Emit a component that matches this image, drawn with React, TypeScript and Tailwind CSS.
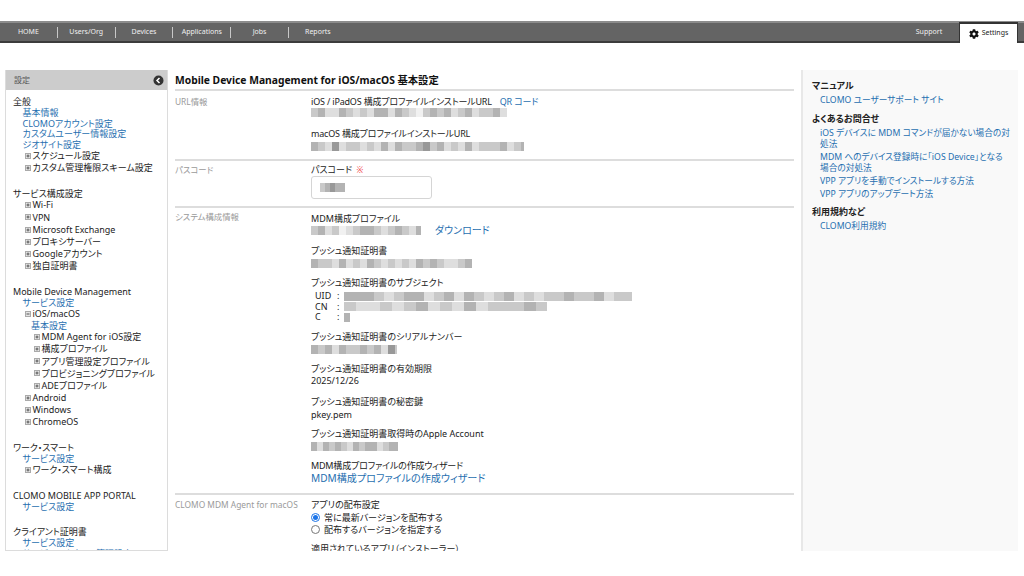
import { FaCog } from "react-icons/fa";

const font = { fontFamily: '"Noto Sans", "Noto Sans CJK JP", sans-serif' };

const shades = ["bg-[#f1f1f1]", "bg-[#dedede]", "bg-[#c9c9c9]", "bg-[#b3b3b3]", "bg-[#989898]"];

const Redact = ({ pattern, cell = 7, className = "" }: { pattern: string; cell?: number; className?: string }) => (
  <div className={`flex h-[9px] overflow-hidden blur-[0.6px] ${className}`}>
    {pattern.split("").map((c, i) => (
      <div key={i} className={`h-full shrink-0 ${shades[Number(c)]}`} style={{ width: cell }} />
    ))}
  </div>
);

const TreeIcon = ({ open = false }: { open?: boolean }) => (
  <svg width="6" height="6" viewBox="0 0 6 6" className="shrink-0">
    <rect x="0.5" y="0.5" width="5" height="5" fill="#e4e4e4" stroke="#aaa" strokeWidth="1" />
    <path d={open ? "M1.5 3H4.5" : "M1.5 3H4.5M3 1.5V4.5"} stroke="#555" strokeWidth="1" />
  </svg>
);

const SideHead = ({ children, className = "" }: { children: React.ReactNode; className?: string }) => (
  <div className={`h-[11px] leading-[11px] text-[#222] whitespace-nowrap ${className}`}>{children}</div>
);

const SideLink = ({ children, deep = false }: { children: React.ReactNode; deep?: boolean }) => (
  <div className={`h-[10.7px] leading-[11px] text-[#1f6fb0] whitespace-nowrap ${deep ? "pl-[18px]" : "pl-[9.5px]"}`}>{children}</div>
);

const Tree = ({ children, open = false, deep = false }: { children: React.ReactNode; open?: boolean; deep?: boolean }) => (
  <div className={`flex h-[12.2px] items-center gap-[1.5px] whitespace-nowrap text-[#222] ${deep ? "pl-[21px]" : "pl-[12px]"}`}>
    <TreeIcon open={open} />
    <span>{children}</span>
  </div>
);

const Sidebar = () => (
  <aside className="flex h-[481px] w-[163px] shrink-0 flex-col border-x border-b border-[#dcdcdc]">
    <div className="flex h-5 shrink-0 items-center justify-between bg-[#cccccc] pl-2 pr-[3px] text-[8px] text-[#555]">
      <span>設定</span>
      <svg width="11" height="11" viewBox="0 0 11 11">
        <circle cx="5.5" cy="5.5" r="5" fill="#333" />
        <path d="M6.5 3L4 5.5L6.5 8" fill="none" stroke="#fff" strokeWidth="1.5" />
      </svg>
    </div>
    <div className="min-h-0 flex-1 overflow-hidden pl-[7px] pt-[6px] text-[9px]">
      <SideHead>全般</SideHead>
      <SideLink>基本情報</SideLink>
      <SideLink>CLOMOアカウント設定</SideLink>
      <SideLink>カスタムユーザー情報設定</SideLink>
      <SideLink>ジオサイト設定</SideLink>
      <Tree>スケジュール設定</Tree>
      <Tree>カスタム管理権限スキーム設定</Tree>
      <SideHead className="mt-[14px]">サービス構成設定</SideHead>
      <Tree>Wi-Fi</Tree>
      <Tree>VPN</Tree>
      <Tree>Microsoft Exchange</Tree>
      <Tree>プロキシサーバー</Tree>
      <Tree>Googleアカウント</Tree>
      <Tree>独自証明書</Tree>
      <SideHead className="mt-[14px]">Mobile Device Management</SideHead>
      <SideLink>サービス設定</SideLink>
      <Tree open>iOS/macOS</Tree>
      <SideLink deep>基本設定</SideLink>
      <Tree deep>MDM Agent for iOS設定</Tree>
      <Tree deep>構成プロファイル</Tree>
      <Tree deep>アプリ管理設定プロファイル</Tree>
      <Tree deep>プロビジョニングプロファイル</Tree>
      <Tree deep>ADEプロファイル</Tree>
      <Tree>Android</Tree>
      <Tree>Windows</Tree>
      <Tree>ChromeOS</Tree>
      <SideHead className="mt-[14px]">ワーク・スマート</SideHead>
      <SideLink>サービス設定</SideLink>
      <Tree>ワーク・スマート構成</Tree>
      <SideHead className="mt-[14px]">CLOMO MOBILE APP PORTAL</SideHead>
      <SideLink>サービス設定</SideLink>
      <SideHead className="mt-[14px]">クライアント証明書</SideHead>
      <SideLink>サービス設定</SideLink>
      <SideLink>サービスアカウント管理設定</SideLink>
    </div>
  </aside>
);

const Section = ({ title, titleTop, children, last = false }: { title: string; titleTop: string; children: React.ReactNode; last?: boolean }) => (
  <section className={`flex ${last ? "" : "border-b-2 border-[#dddddd]"}`}>
    <div className={`w-[136px] shrink-0 text-[8.4px] leading-[12px] whitespace-nowrap text-[#9a9a9a] ${titleTop}`}>{title}</div>
    <div className="min-w-0 flex-1">{children}</div>
  </section>
);

const Label = ({ children, className = "" }: { children: React.ReactNode; className?: string }) => (
  <div className={`h-[12px] leading-[12px] text-[#222] whitespace-nowrap ${className}`}>{children}</div>
);

const SubjectRow = ({ name, children }: { name: string; children: React.ReactNode }) => (
  <div className="flex h-[10.5px] items-center">
    <span className="w-[22px]">{name}</span>
    <span className="w-[7px]">:</span>
    {children}
  </div>
);

const Main = () => (
  <main className="h-[481px] w-[619px] shrink-0 overflow-hidden text-[9px]">
    <h1 className="h-[21px] border-b-2 border-[#dddddd] text-[10.3px] leading-[20px] font-bold text-[#111]">
      Mobile Device Management for iOS/macOS 基本設定
    </h1>
    <Section title="URL情報" titleTop="pt-[5px]">
      <div className="pt-[5px] pb-[8px]">
        <Label className="tracking-[-0.18px]">
          iOS / iPadOS 構成プロファイルインストールURL
          <span className="ml-2 text-[#1f6fb0]">QR コード</span>
        </Label>
        <Redact cell={7} pattern="23113212133132102323123122312313" className="w-[196px]" />
        <Label className="mt-[11px] tracking-[-0.18px]">macOS 構成プロファイルインストールURL</Label>
        <Redact cell={7} pattern="321412212131322342312131222312323" className="mt-[2px] w-[213px]" />
      </div>
    </Section>
    <Section title="パスコード" titleTop="pt-[3px]">
      <div className="pt-[3px] pb-[7px]">
        <Label>
          パスコード <span className="ml-[2px] text-[8px] text-[#ee3333]">※</span>
        </Label>
        <div className="flex h-[23px] w-[121px] items-center rounded-[3px] border border-[#d5d5d5] pl-2">
          <Redact cell={5} pattern="23433" />
        </div>
      </div>
    </Section>
    <Section title="システム構成情報" titleTop="pt-[3px]">
      <div className="pt-[5px] pb-[8px]">
        <Label>MDM構成プロファイル</Label>
        <div className="mt-[-2px] flex h-[15px] items-center">
          <Redact cell={7} pattern="2312012332123213" className="w-[110px]" />
          <span className="ml-[14px] text-[10px] text-[#1f6fb0]">ダウンロード</span>
        </div>
        <Label className="mt-[7px]">プッシュ通知証明書</Label>
        <Redact cell={7} pattern="32213121321212132321123" className="mt-[2px] w-[161px]" />
        <Label className="mt-[9px]">プッシュ通知証明書のサブジェクト</Label>
        <div className="mt-[2px] pl-[4px] leading-[10.5px] text-[#222]">
          <SubjectRow name="UID">
            <Redact cell={10} pattern="33321233123132123121223223122" className="w-[288px]" />
          </SubjectRow>
          <SubjectRow name="CN">
            <Redact cell={12} pattern="21121231213122232" className="w-[203px]" />
          </SubjectRow>
          <SubjectRow name="C">
            <Redact cell={6} pattern="3" />
          </SubjectRow>
        </div>
        <Label className="mt-[8px]">プッシュ通知証明書のシリアルナンバー</Label>
        <Redact cell={7} pattern="3231322323142" className="mt-[2px] w-[86px]" />
        <Label className="mt-[9px]">プッシュ通知証明書の有効期限</Label>
        <Label>2025/12/26</Label>
        <Label className="mt-[9px]">プッシュ通知証明書の秘密鍵</Label>
        <Label className="mt-[1px]">pkey.pem</Label>
        <Label className="mt-[7px]">プッシュ通知証明書取得時のApple Account</Label>
        <Redact cell={6} pattern="313232132331233" className="mt-[2px] w-[87px]" />
        <Label className="mt-[9px] tracking-[-0.18px]">MDM構成プロファイルの作成ウィザード</Label>
        <div className="h-[13px] text-[10.1px] leading-[13px] whitespace-nowrap text-[#1f6fb0]">MDM構成プロファイルの作成ウィザード</div>
      </div>
    </Section>
    <Section title="CLOMO MDM Agent for macOS" titleTop="pt-[4px]" last>
      <div className="pt-[4px]">
        <Label>アプリの配布設定</Label>
        <div className="mt-[1px] flex h-[12px] items-center gap-[4px] text-[#222]">
          <span className="flex h-[9px] w-[9px] items-center justify-center rounded-full border border-[#1a73e8]">
            <span className="h-[5px] w-[5px] rounded-full bg-[#1a73e8]" />
          </span>
          常に最新バージョンを配布する
        </div>
        <div className="flex h-[12px] items-center gap-[4px] text-[#222]">
          <span className="h-[9px] w-[9px] rounded-full border border-[#777]" />
          配布するバージョンを指定する
        </div>
        <Label className="mt-[7px]">適用されているアプリ（インストーラー）</Label>
      </div>
    </Section>
  </main>
);

const HelpHead = ({ children }: { children: React.ReactNode }) => (
  <div className="h-[12px] text-[9px] leading-[12px] font-bold text-[#222]">{children}</div>
);

const HelpLink = ({ children }: { children: React.ReactNode }) => (
  <div className="mt-[1px] pl-2 leading-[11.6px] text-[#1f6fb0]">{children}</div>
);

const Help = () => (
  <aside className="h-[481px] w-[217px] shrink-0 border-l-2 border-[#e8e8e8] bg-[#f9f9f9] pl-[9px] pr-[8px] pt-[10px] text-[8.7px]">
    <HelpHead>マニュアル</HelpHead>
    <div className="mt-[3px]">
      <HelpLink>CLOMO ユーザーサポート サイト</HelpLink>
    </div>
    <div className="mt-[6px]">
      <HelpHead>よくあるお問合せ</HelpHead>
    </div>
    <div className="mt-[3px]">
      <HelpLink>iOS デバイスに MDM コマンドが届かない場合の対処法</HelpLink>
      <HelpLink>MDM へのデバイス登録時に「iOS Device」となる場合の対処法</HelpLink>
      <HelpLink>VPP アプリを手動でインストールする方法</HelpLink>
      <HelpLink>VPP アプリのアップデート方法</HelpLink>
    </div>
    <div className="mt-[6px]">
      <HelpHead>利用規約など</HelpHead>
    </div>
    <div className="mt-[3px]">
      <HelpLink>CLOMO利用規約</HelpLink>
    </div>
  </aside>
);

const navItems = ["HOME", "Users/Org", "Devices", "Applications", "Jobs", "Reports"];

const Nav = () => (
  <nav className="flex h-[22px] items-stretch justify-between border-y-2 border-t-[#8c8c8c] border-b-[#3c3c3c] bg-[#646464] text-[7px] text-[#f0f0f0]">
    <div className="flex items-center">
      {navItems.map((item, i) => (
        <div key={item} className={`flex h-[11px] w-[57.8px] items-center justify-center border-[#c8c8c8] ${i < 5 ? "border-r" : ""}`}>
          {item}
        </div>
      ))}
    </div>
    <div className="flex items-stretch">
      <div className="flex w-[58px] items-center justify-center">Support</div>
      <div className="-mt-[1px] -mb-[2px] mr-[6px] ml-[1px] flex w-[59px] items-center justify-center gap-[3px] border-x border-t-2 border-[#333] bg-white text-[#222]">
        <FaCog size={10} className="text-[#111]" />
        Settings
      </div>
    </div>
  </nav>
);

export default function App() {
  return (
    <div className="h-[576px] w-[1024px] overflow-hidden bg-white pt-[21px] [font-feature-settings:'palt']" style={font}>
      <Nav />
      <div className="mt-[27px] flex pl-[5px]">
        <Sidebar />
        <div className="w-[7px] shrink-0" />
        <Main />
        <div className="w-[7px] shrink-0" />
        <Help />
      </div>
    </div>
  );
}
